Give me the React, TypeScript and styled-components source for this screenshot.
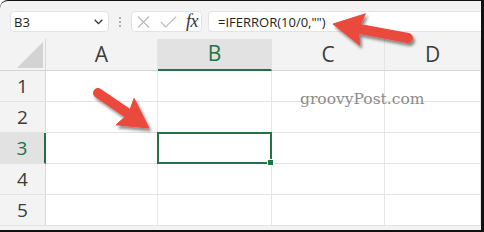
import React from 'react';
import styled, { createGlobalStyle } from 'styled-components';

const GREEN = '#217346';

const Global = createGlobalStyle`
  html, body { margin: 0; padding: 0; background: #ffffff; }
  body { font-family: "Open Sans", "Noto Sans", sans-serif; }
`;

const Frame = styled.div`
  position: relative;
  width: 484px;
  height: 232px;
  box-sizing: border-box;
  border-top: 1px solid #111;
  border-right: 3px solid #111;
  border-bottom: 2px solid #111;
  border-top-left-radius: 8px;
  background: #f3f3f3;
  overflow: hidden;
  display: flex;
  flex-direction: column;
`;

const Toolbar = styled.div`
  height: 38px;
  flex: none;
  box-sizing: border-box;
  display: flex;
  align-items: flex-start;
  padding: 10px 0 0 10px;
`;

const Field = styled.div<{ $w?: number }>`
  box-sizing: border-box;
  height: 21px;
  background: #ffffff;
  border: 1px solid #e3e3e3;
  border-radius: 4px;
  display: flex;
  align-items: center;
  ${(p) => (p.$w ? `width: ${p.$w}px; flex: none;` : 'flex: 1;')}
`;

const NameBox = styled(Field)`
  padding: 0 5px 0 3px;
  justify-content: space-between;
  font-size: 13px;
  color: #222;
`;

const Dots = styled.div`
  width: 22px;
  height: 21px;
  flex: none;
  display: flex;
  flex-direction: column;
  align-items: center;
  justify-content: center;
  gap: 2px;
  span {
    width: 2px;
    height: 2px;
    background: #9a9a9a;
    border-radius: 1px;
  }
`;

const ButtonBox = styled(Field)`
  padding: 0 3px 0 5px;
  justify-content: space-between;
  margin-right: 6px;
`;

const Fx = styled.span`
  font-family: "Liberation Serif", "DejaVu Serif", serif;
  font-style: italic;
  font-size: 18px;
  color: #333;
  line-height: 1;
  margin-top: -2px;
  letter-spacing: -0.5px;
`;

const FormulaBox = styled(Field)`
  border-right: none;
  border-radius: 4px 0 0 4px;
  padding-left: 9px;
  font-size: 13px;
  color: #222;
  white-space: pre;
`;

const Grid = styled.div`
  display: grid;
  grid-template-columns: 46px 112px 114px 113px 1fr;
  grid-template-rows: 32px repeat(5, 31px);
  flex: 1;
`;

const Corner = styled.div`
  background: #f3f3f3;
  border-right: 1px solid #d9d9d9;
  border-bottom: 1px solid #d4d4d4;
  box-sizing: border-box;
  display: flex;
  align-items: flex-end;
  justify-content: flex-end;
  padding: 0 2px 2px 0;
  svg {
    display: block;
    flex: none;
  }
`;

const ColHeader = styled.div<{ $active?: boolean }>`
  box-sizing: border-box;
  display: flex;
  align-items: center;
  justify-content: center;
  font-size: 21px;
  padding-bottom: 2px;
  color: ${(p) => (p.$active ? GREEN : '#3b3b3b')};
  background: ${(p) => (p.$active ? '#e2e2e2' : '#f3f3f3')};
  border-right: 1px solid ${(p) => (p.$active ? '#e2e2e2' : '#e4e4e4')};
  border-bottom: ${(p) => (p.$active ? `2px solid ${GREEN}` : '1px solid #d4d4d4')};
`;

const RowHeader = styled.div<{ $active?: boolean }>`
  box-sizing: border-box;
  display: flex;
  align-items: center;
  justify-content: center;
  font-size: 19px;
  padding-bottom: 1px;
  color: ${(p) => (p.$active ? GREEN : '#3b3b3b')};
  background: ${(p) => (p.$active ? '#e2e2e2' : '#f3f3f3')};
  border-right: ${(p) => (p.$active ? `2px solid ${GREEN}` : '1px solid #d9d9d9')};
  border-bottom: 1px solid #e3e3e3;
`;

const Cell = styled.div`
  position: relative;
  box-sizing: border-box;
  background: #ffffff;
  border-right: 1px solid #e6e6e6;
  border-bottom: 1px solid #e3e3e3;
`;

const Selection = styled.div`
  position: absolute;
  top: -1px;
  left: -1px;
  right: -1px;
  bottom: -1px;
  border: 2px solid ${GREEN};
  z-index: 2;
  &::after {
    content: '';
    position: absolute;
    right: -4px;
    bottom: -4px;
    width: 5px;
    height: 5px;
    background: ${GREEN};
    border: 1px solid #ffffff;
  }
`;

const Watermark = styled.div`
  position: absolute;
  left: 300px;
  top: 89px;
  font-family: "DejaVu Serif", "Liberation Serif", serif;
  font-size: 15.5px;
  color: #8a8a8a;
  pointer-events: none;
  z-index: 3;
`;

const Overlay = styled.svg`
  position: absolute;
  left: 0;
  top: -1px;
  width: 484px;
  height: 232px;
  pointer-events: none;
  z-index: 4;
`;

type Pt = [number, number];

function headPoints(tip: Pt, tail: Pt, len: number, half: number) {
  const dx = tail[0] - tip[0];
  const dy = tail[1] - tip[1];
  const L = Math.hypot(dx, dy);
  const ux = dx / L;
  const uy = dy / L;
  const nx = -uy;
  const ny = ux;
  const bx = tip[0] + ux * len;
  const by = tip[1] + uy * len;
  const nb = [bx - ux * 4, by - uy * 4];
  const f = (x: number, y: number) => `${x.toFixed(1)},${y.toFixed(1)}`;
  return [
    f(tip[0], tip[1]),
    f(bx + nx * half, by + ny * half),
    f(nb[0], nb[1]),
    f(bx - nx * half, by - ny * half),
  ].join(' ');
}

const ARROW = '#ea4a3e';

const Arrow: React.FC<{ tip: Pt; tail: Pt; len: number; half: number; width: number }> = ({
  tip,
  tail,
  len,
  half,
  width,
}) => {
  const dx = tail[0] - tip[0];
  const dy = tail[1] - tip[1];
  const L = Math.hypot(dx, dy);
  const sx = tip[0] + (dx / L) * (len - 6);
  const sy = tip[1] + (dy / L) * (len - 6);
  return (
    <g filter="url(#shadow)">
      <line x1={sx} y1={sy} x2={tail[0]} y2={tail[1]} stroke={ARROW} strokeWidth={width} strokeLinecap="round" />
      <polygon points={headPoints(tip, tail, len, half)} fill={ARROW} strokeLinejoin="round" stroke={ARROW} strokeWidth={1} />
    </g>
  );
};

const XIcon = () => (
  <svg width="13" height="12" viewBox="0 0 13 12">
    <path d="M1 0.5 L12 11.5 M12 0.5 L1 11.5" stroke="#b8b8b8" strokeWidth="1.1" fill="none" />
  </svg>
);

const CheckIcon = () => (
  <svg width="17" height="12" viewBox="0 0 17 12">
    <path d="M0.8 6 L5.6 11 L16.2 0.6" stroke="#b8b8b8" strokeWidth="1.1" fill="none" />
  </svg>
);

const Chevron = () => (
  <svg width="9" height="6" viewBox="0 0 9 6">
    <path d="M0.7 0.8 L4.5 4.6 L8.3 0.8" stroke="#333" strokeWidth="1.3" fill="none" />
  </svg>
);

const SelectAll = () => (
  <svg width="26" height="26" viewBox="0 0 26 26">
    <polygon points="26,0 26,26 0,26" fill="#d3d3d3" />
  </svg>
);

const cols = ['A', 'B', 'C', 'D'];
const rows = [1, 2, 3, 4, 5];

export default function App() {
  return (
    <Frame>
      <Global />
      <Toolbar>
        <NameBox $w={99}>
          <span>B3</span>
          <Chevron />
        </NameBox>
        <Dots>
          <span />
          <span />
          <span />
        </Dots>
        <ButtonBox $w={71}>
          <XIcon />
          <CheckIcon />
          <Fx>fx</Fx>
        </ButtonBox>
        <FormulaBox>{'=IFERROR(10/0,"")'}</FormulaBox>
      </Toolbar>
      <Grid>
        <Corner>
          <SelectAll />
        </Corner>
        {cols.map((c) => (
          <ColHeader key={c} $active={c === 'B'}>
            {c}
          </ColHeader>
        ))}
        {rows.map((r) => (
          <React.Fragment key={r}>
            <RowHeader $active={r === 3}>{r}</RowHeader>
            {cols.map((c) => (
              <Cell key={c}>{r === 3 && c === 'B' ? <Selection /> : null}</Cell>
            ))}
          </React.Fragment>
        ))}
      </Grid>
      <Watermark>groovyPost.com</Watermark>
      <Overlay viewBox="0 0 484 232">
        <defs>
          <filter id="shadow" x="-30%" y="-30%" width="160%" height="160%">
            <feDropShadow dx="2" dy="3" stdDeviation="1.6" floodColor="#000" floodOpacity="0.45" />
          </filter>
        </defs>
        <Arrow tip={[333, 24]} tail={[408, 38]} len={30} half={16} width={10} />
        <Arrow tip={[149, 128]} tail={[98, 93]} len={29} half={16} width={10} />
      </Overlay>
    </Frame>
  );
}
